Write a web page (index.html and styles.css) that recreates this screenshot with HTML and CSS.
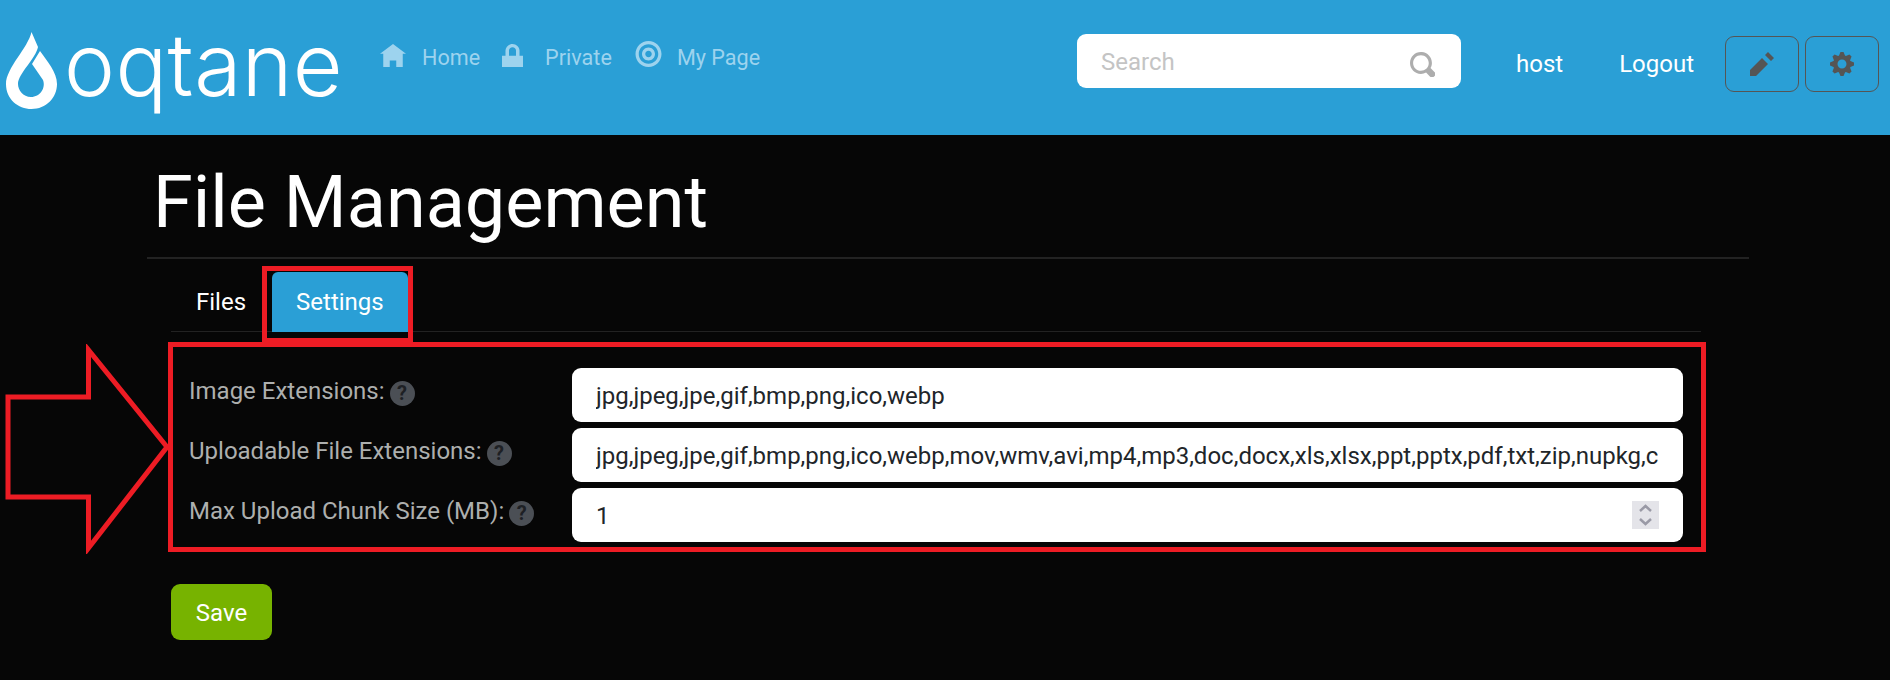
FILE: index.html
```html
<!DOCTYPE html>
<html lang="en">
<head>
    <meta charset="UTF-8">
    <meta name="viewport" content="width=device-width, initial-scale=1.0">
    <title>File Management</title>
    <link rel="stylesheet" href="styles.css">
</head>
<body>

    <header class="topbar">
        <a class="brand" href="#">
            <svg class="brand-drop" viewBox="6 32 51 77">
                <path d="M31.5 32C28 48 6 68 6 84C6 99 18 109 31.5 109C46 109 57 98 57 84C57 72 47 61 40 51L32 64L43 80C46 88 40 97 31 97C23 97 18 90 18 84C18 74 36 58 38 47Z"/>
            </svg>
            <span class="brand-name">oqtane</span>
        </a>
        <nav class="nav">
            <a class="nav-link" href="#">
                <svg class="icon-home" viewBox="0 0 8 7" preserveAspectRatio="none"><path d="M4 0l-4 3h1v4h2v-2h2v2h2v-4.030l1 .03-4-3z"/></svg>
                <span>Home</span>
            </a>
            <a class="nav-link" href="#">
                <svg class="icon-lock" viewBox="0 0 6 7" preserveAspectRatio="none"><path d="M3 0c-1.100 0-2 .9-2 2v1.600h-1v3.400h6v-3.400h-1v-1.600c0-1.100-.9-2-2-2zm0 1c.56 0 1 .44 1 1v1.600h-2v-1.600c0-.56.44-1 1-1z"/></svg>
                <span>Private</span>
            </a>
            <a class="nav-link" href="#">
                <svg class="icon-target" viewBox="0 0 8 8"><path d="M4 0c-2.200 0-4 1.800-4 4s1.800 4 4 4 4-1.800 4-4-1.800-4-4-4zm0 1c1.660 0 3 1.340 3 3s-1.340 3-3 3-3-1.340-3-3 1.340-3 3-3zm0 1c-1.100 0-2 .9-2 2s.9 2 2 2 2-.9 2-2-.9-2-2-2zm0 1c.56 0 1 .44 1 1s-.44 1-1 1-1-.44-1-1 .44-1 1-1z"/></svg>
                <span>My Page</span>
            </a>
        </nav>
        <div class="search">
            <input class="search-input" type="text" placeholder="Search">
            <svg class="search-icon" viewBox="0 0 8 8"><path d="M3.500 0c-1.930 0-3.500 1.570-3.500 3.500s1.570 3.500 3.500 3.500c.59 0 1.170-.14 1.660-.41a1 1 0 0 0 .13.13l1 1a1.020 1.020 0 1 0 1.440-1.440l-1-1a1 1 0 0 0-.16-.13c.27-.49.44-1.060.44-1.660 0-1.930-1.570-3.500-3.500-3.500zm0 1c1.390 0 2.500 1.110 2.500 2.500 0 .66-.24 1.270-.66 1.720-.01.01-.02.02-.03.03a1 1 0 0 0-.13.13c-.44.4-1.040.63-1.690.63-1.390 0-2.500-1.110-2.500-2.500s1.110-2.500 2.500-2.500z"/></svg>
        </div>
        <a class="user-link user-host" href="#">host</a>
        <a class="user-link user-logout" href="#">Logout</a>
        <button class="tool-button tool-first">
            <svg viewBox="0 0 8 8"><path d="M6 0l-1 1 2 2 1-1-2-2zm-2 2l-4 4v2h2l4-4-2-2z"/></svg>
        </button>
        <button class="tool-button">
            <svg viewBox="0 0 8 8"><path d="M3.500 0l-.5 1.190c-.1.03-.19.08-.28.13l-1.190-.5-.72.72.5 1.190c-.05.1-.09.18-.13.28l-1.190.5v1l1.190.5c.04.1.08.18.13.28l-.5 1.190.72.72 1.190-.5c.09.04.18.09.28.13l.5 1.190h1l.5-1.190c.09-.04.19-.08.28-.13l1.190.5.72-.72-.5-1.190c.04-.09.09-.19.13-.28l1.190-.5v-1l-1.190-.5c-.03-.09-.08-.19-.13-.28l.5-1.190-.72-.72-1.190.5c-.09-.04-.19-.09-.28-.13l-.5-1.190h-1zm.5 2.500c.83 0 1.500.67 1.500 1.500s-.67 1.500-1.500 1.500-1.500-.67-1.500-1.500.67-1.500 1.500-1.500z"/></svg>
        </button>
    </header>

    <main class="content">
        <h1 class="page-title">File Management</h1>
        <hr class="title-rule">
        <div class="tabs">
            <a class="tab tab-files" href="#">Files</a>
            <a class="tab tab-active" href="#">Settings</a>
        </div>
        <form class="settings">
            <div class="row">
                <label class="row-label">Image Extensions:<span class="help">?</span></label>
                <input class="field" type="text" value="jpg,jpeg,jpe,gif,bmp,png,ico,webp">
            </div>
            <div class="row">
                <label class="row-label">Uploadable File Extensions:<span class="help">?</span></label>
                <input class="field" type="text" value="jpg,jpeg,jpe,gif,bmp,png,ico,webp,mov,wmv,avi,mp4,mp3,doc,docx,xls,xlsx,ppt,pptx,pdf,txt,zip,nupkg,csv,json,xml,rtf">
            </div>
            <div class="row">
                <label class="row-label">Max Upload Chunk Size (MB):<span class="help">?</span></label>
                <div class="field-wrap">
                    <input class="field" type="text" value="1">
                    <span class="spinner">
                        <svg viewBox="0 0 27 28"><path d="M8 10l5.500-5 5.500 5M8 18l5.500 5 5.500-5"/></svg>
                    </span>
                </div>
            </div>
            <button class="save" type="button">Save</button>
        </form>
    </main>

    <!-- red markup drawn on top of the screenshot -->
    <div class="mark mark-tab"></div>
    <div class="mark mark-form"></div>
    <svg class="mark-arrow" viewBox="0 0 172 210">
        <path d="M8 53H88.500V6L167 103L88.500 204V153H8Z"/>
    </svg>

</body>
</html>
```

FILE: styles.css
```css
html, body{
    margin: 0;
    height: 680px;
    overflow: hidden;
}
body{
    position: relative;
    background-color: #060606;
    font-family: Roboto, "Liberation Sans", sans-serif;
    font-size: 24px;
    color: #fff;
}
a{
    color: inherit;
    text-decoration: none;
}

/* top bar */
.topbar{
    display: flex;
    align-items: flex-start;
    height: 135px;
    padding: 0 11px 0 6px;
    box-sizing: border-box;
    background-color: #2a9fd6;
}
.brand{
    display: flex;
    align-items: flex-start;
    width: 374px;
    flex: none;
}
.brand-drop{
    width: 51px;
    height: 77px;
    margin-top: 32px;
    fill: #fff;
    flex: none;
}
.brand-name{
    margin: 0 0 0 7px;
    padding-top: 13px;
    font-family: Inter, Roboto, sans-serif;
    font-size: 86px;
    font-weight: 300;
    letter-spacing: 0.4px;
    line-height: 104px;
}
.nav{
    display: flex;
    align-items: flex-end;
    gap: 22px;
    margin-top: 41px;
    color: #9dd3ee;
    font-size: 21.6px;
}
.nav-link{
    display: flex;
    align-items: flex-end;
    line-height: 26px;
}
.nav-link svg{
    flex: none;
    margin-bottom: 4px;
    fill: currentColor;
}
.icon-home{
    width: 26px;
    height: 23px;
    margin-right: 16px;
}
.icon-lock{
    width: 21px;
    height: 23px;
    margin-right: 22px;
}
.icon-target{
    width: 27px;
    height: 26px;
    margin: 0 15px 4px 1px;
}
.search{
    position: relative;
    width: 384px;
    height: 54px;
    margin: 34px 0 0 auto;
}
.search-input{
    width: 100%;
    height: 100%;
    padding: 1px 24px 0;
    box-sizing: border-box;
    border: none;
    border-radius: 9px;
    font: inherit;
    color: #333;
}
.search-input::placeholder{
    color: #c4c4c4;
    opacity: 1;
}
.search-icon{
    position: absolute;
    top: 18px;
    right: 26px;
    width: 25px;
    height: 25px;
    fill: #adadad;
}
.user-link{
    margin-top: 50px;
    line-height: 28px;
}
.user-host{
    margin-left: 55px;
}
.user-logout{
    margin-left: 56px;
}
.tool-button{
    display: flex;
    align-items: center;
    justify-content: center;
    width: 74px;
    height: 56px;
    margin: 36px 0 0 6px;
    padding: 0;
    background: transparent;
    border: 1px solid #555;
    border-radius: 9px;
}
.tool-button svg{
    width: 24px;
    height: 24px;
    fill: #555;
}
.tool-first{
    margin-left: 31px;
}

/* page */
.content{
    width: 1602px;
    margin-left: 147px;
}
.page-title{
    margin: 0;
    padding: 25px 0 11px 6px;
    font-size: 72px;
    font-weight: 400;
    line-height: 86px;
}
.title-rule{
    height: 2px;
    margin: 0;
    border: none;
    background-color: #222;
}
.tabs{
    display: flex;
    width: 1530px;
    margin: 13px 0 0 24px;
    border-bottom: 1px solid #222;
}
.tab{
    padding: 0 24px;
    line-height: 60px;
    height: 60px;
    margin-bottom: -1px;
}
.tab-files{
    padding-left: 25px;
}
.tab-active{
    margin-left: 2px;
    background-color: #2a9fd6;
    border-radius: 6px 6px 0 0;
}
.settings{
    display: flex;
    flex-direction: column;
    gap: 6px;
    width: 1512px;
    margin: 36px 0 0 24px;
}
.row{
    display: grid;
    grid-template-columns: 401px 1fr;
    align-items: start;
}
.row-label{
    display: flex;
    align-items: center;
    gap: 5px;
    margin: 8px 0 0 18px;
    color: #adafae;
    line-height: 28px;
    white-space: nowrap;
}
.help{
    display: block;
    width: 25px;
    height: 25px;
    margin-top: 5px;
    border-radius: 50%;
    background-color: #4b4f55;
    color: #1d2024;
    font-size: 20px;
    font-weight: 700;
    line-height: 25px;
    text-align: center;
}
.field-wrap{
    position: relative;
}
.field{
    display: block;
    width: 100%;
    height: 54px;
    padding: 1px 24px 0;
    box-sizing: border-box;
    border: none;
    border-radius: 9px;
    background-color: #fff;
    font: inherit;
    color: #212529;
}
.spinner{
    position: absolute;
    top: 13px;
    right: 24px;
    width: 27px;
    height: 28px;
    background-color: #e4e4e9;
}
.spinner svg{
    display: block;
    width: 27px;
    height: 28px;
    fill: none;
    stroke: #9a9aa6;
    stroke-width: 2.5;
}
.save{
    width: 101px;
    height: 56px;
    margin-top: 36px;
    padding: 2px 0 0;
    border: none;
    border-radius: 9px;
    background-color: #77b300;
    color: #fff;
    font: inherit;
}

/* annotations */
.mark{
    position: absolute;
    box-sizing: border-box;
    border: 5px solid #ed1c24;
}
.mark-tab{
    left: 262px;
    top: 266px;
    width: 151px;
    height: 77px;
}
.mark-form{
    left: 168px;
    top: 342px;
    width: 1538px;
    height: 210px;
}
.mark-arrow{
    position: absolute;
    left: 0;
    top: 344px;
    width: 172px;
    height: 210px;
    fill: none;
    stroke: #ed1c24;
    stroke-width: 5;
}
```
